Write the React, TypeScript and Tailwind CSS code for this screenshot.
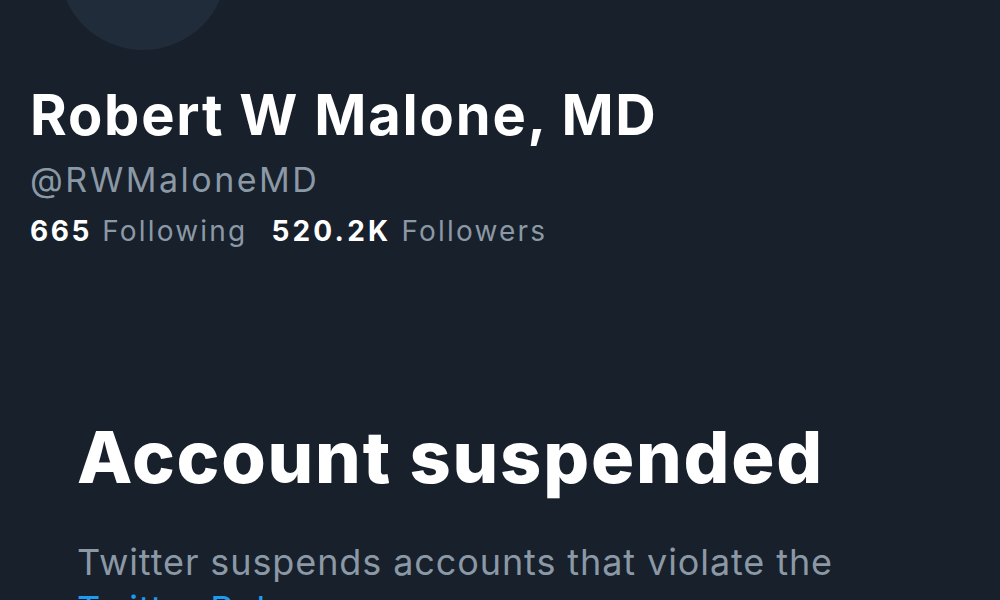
export default function App() {
  return (
    <div className="w-[1000px] h-[600px] overflow-hidden bg-[#17202b] text-white" style={{ fontFamily: "Inter, 'Noto Sans', sans-serif" }}>
      <div className="pl-[30px]">
        <div className="ml-[29px] mt-[-118px] w-[168px] h-[168px] rounded-full bg-[#212c3b]" />
        <h1 className="mt-[33px] text-[56px] leading-[64px] font-bold tracking-[1.8px]">Robert W Malone, MD</h1>
        <div className="mt-[12px] text-[34px] leading-[42px] tracking-[2.5px] text-[#8b98a5]">@RWMaloneMD</div>
        <div className="mt-[13px] text-[28px] leading-[34px] tracking-[2.2px] text-[#8b98a5]">
          <span className="font-bold text-white tracking-[2.6px]">665</span> Following
          <span className="ml-[24px] font-bold text-white tracking-[3.2px]">520.2K</span> Followers
        </div>
      </div>
      <div className="pl-[77px] mt-[169px]">
        <h2 className="text-[72px] leading-[80px] font-extrabold tracking-[1.8px]">Account suspended</h2>
        <p className="mt-[42px] w-[860px] text-[36px] leading-[47px] tracking-[0.9px] text-[#8b98a5]">
          Twitter suspends accounts that violate the <br /><span className="text-[#1d9bf0]">Twitter Rules</span>.
        </p>
      </div>
    </div>
  );
}
